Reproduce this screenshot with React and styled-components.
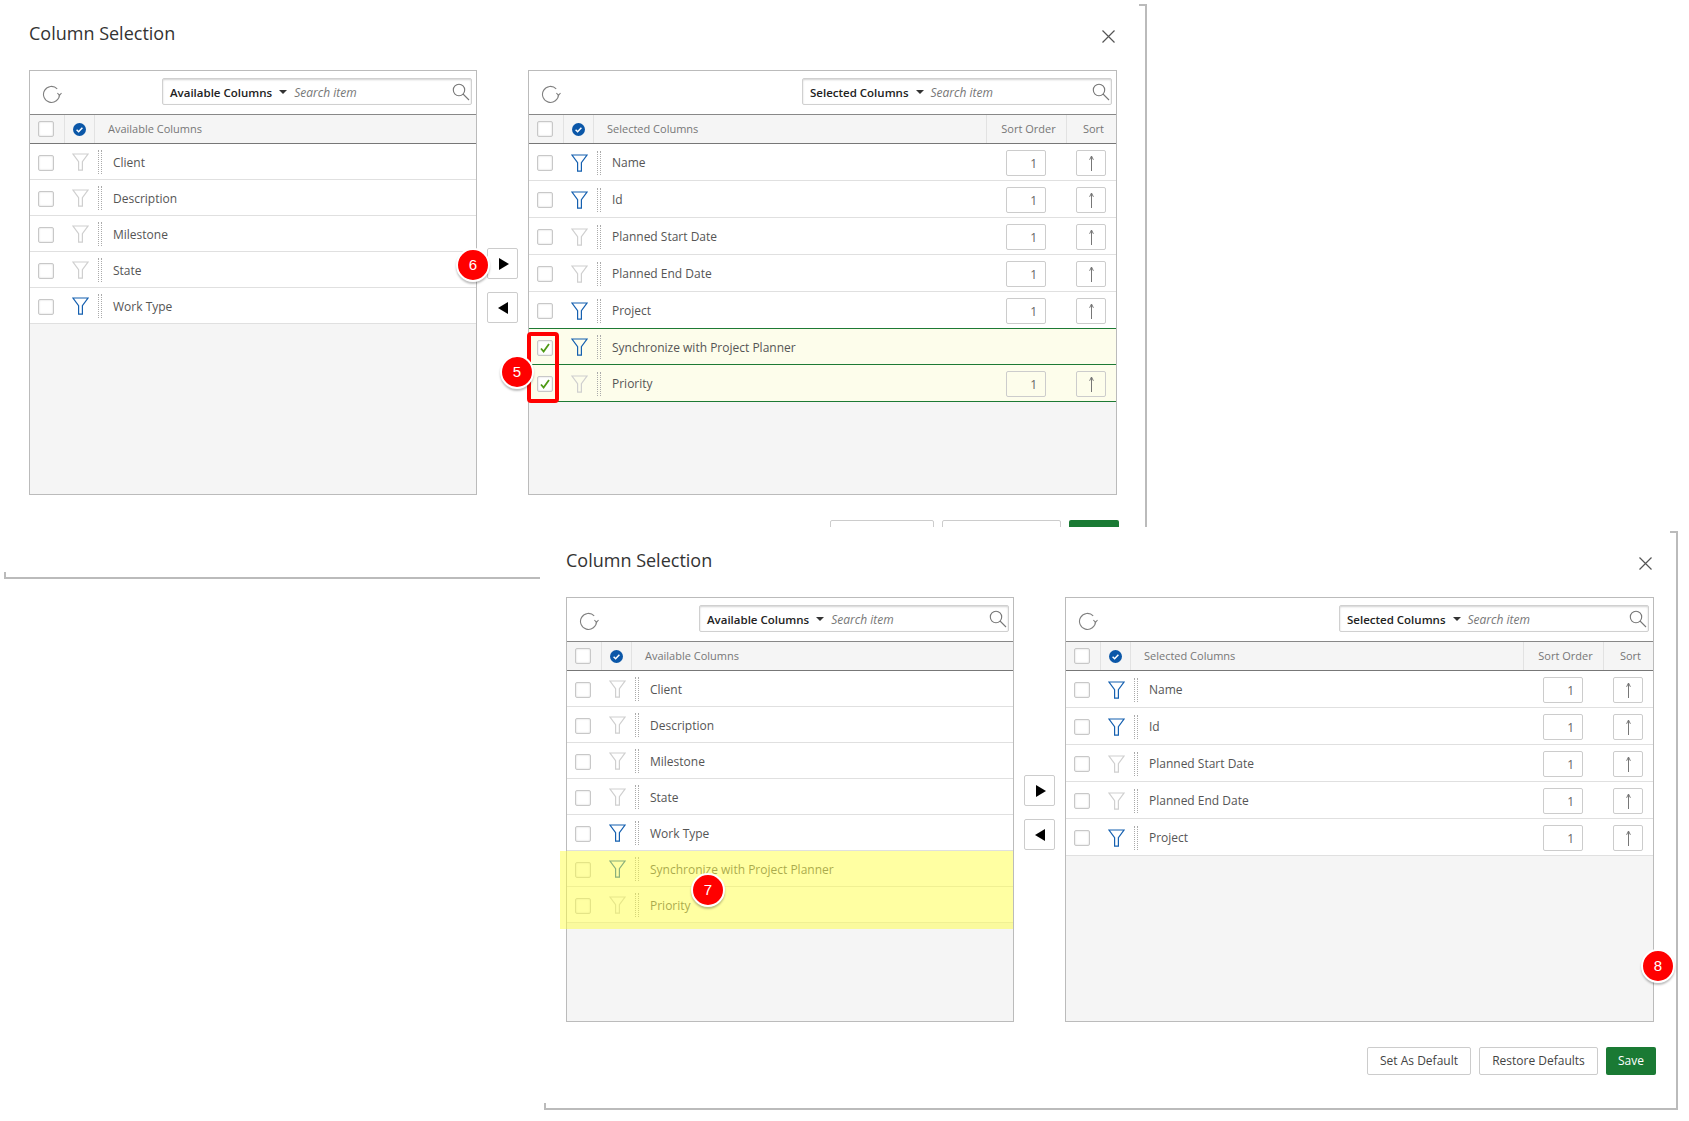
import React from "react";
import styled, { createGlobalStyle } from "styled-components";

const GlobalStyle = createGlobalStyle`
  * { box-sizing: border-box; }
  body {
    margin: 0;
    background: #fff;
    color: #555;
    font-family: "Open Sans", "Liberation Sans", sans-serif;
  }
`;

const AVAILABLE = [
  { name: "Client" },
  { name: "Description" },
  { name: "Milestone" },
  { name: "State" },
  { name: "Work Type", filtered: true },
];

const MOVED = [
  { name: "Synchronize with Project Planner", filtered: true },
  { name: "Priority" },
];

const SELECTED = [
  { name: "Name", filtered: true },
  { name: "Id", filtered: true },
  { name: "Planned Start Date" },
  { name: "Planned End Date" },
  { name: "Project", filtered: true },
];

function RefreshIcon() {
  return (
    <svg width="20" height="20" viewBox="0 0 20 20" fill="none" stroke="#808080" strokeWidth="1.1">
      <path d="M17.5 9.5A8 8 0 1 1 15.2 3.8" />
      <path d="M15.4 8l2.1 2.3 2-2.3" />
    </svg>
  );
}

function SearchIcon() {
  return (
    <svg width="18" height="18" viewBox="0 0 18 18" fill="none" stroke="#777" strokeWidth="1.1">
      <circle cx="7" cy="7" r="5.7" />
      <path d="M11 11l6 6" />
    </svg>
  );
}

function CloseIcon() {
  return (
    <svg width="13" height="13" viewBox="0 0 13 13" stroke="#555" strokeWidth="1.2">
      <path d="M.5.5l12 12M12.5.5l-12 12" />
    </svg>
  );
}

function FilterIcon({ active }) {
  return (
    <svg width="17" height="18" viewBox="0 0 17 18" fill="none" stroke={active ? "#1560b0" : "#cfcfcf"} strokeWidth="1.2">
      <path d="M1 1h15l-5.6 7.6v8.6H6.6V8.6z" />
    </svg>
  );
}

function CheckedCircle() {
  return (
    <svg width="13" height="13" viewBox="0 0 13 13">
      <circle cx="6.5" cy="6.5" r="6.5" fill="#0b57a8" />
      <path d="M3.6 6.8l2 1.9 3.8-4" fill="none" stroke="#fff" strokeWidth="1.5" />
    </svg>
  );
}

function UpArrow() {
  return (
    <svg width="9" height="16" viewBox="0 0 9 16" fill="none" stroke="#777" strokeWidth="1">
      <path d="M4.5 16V1M2.6 4.8l1.9-3.8 1.9 3.8" />
    </svg>
  );
}

function Triangle({ left }) {
  return (
    <svg width="10" height="12" viewBox="0 0 10 12" fill="#000">
      <path d={left ? "M10 0v12L0 6z" : "M0 0v12l10-6z"} />
    </svg>
  );
}

function ColumnRow({ row, height, sortable, picked, lastPlain }) {
  return (
    <Row $height={height} $picked={picked} $lastPlain={lastPlain}>
      <CheckCell>
        <Checkbox>
          {picked && (
            <svg width="10" height="10" viewBox="0 0 10 10" fill="none" stroke="#4f9a16" strokeWidth="1.8">
              <path d="M1 5.5l2.6 3L9 1" />
            </svg>
          )}
        </Checkbox>
      </CheckCell>
      <FilterCell>
        <FilterIcon active={row.filtered} />
      </FilterCell>
      <Grip />
      <RowName>{row.name}</RowName>
      {sortable && !row.noSort && (
        <>
          <OrderBox>1</OrderBox>
          <SortBox>
            <UpArrow />
          </SortBox>
        </>
      )}
    </Row>
  );
}

function Toolbar({ label }) {
  return (
    <ToolbarRow>
      <RefreshWrap>
        <RefreshIcon />
      </RefreshWrap>
      <SearchBox>
        <SearchLabel>{label}</SearchLabel>
        <Caret />
        <SearchHint>Search item</SearchHint>
        <SearchIcon />
      </SearchBox>
    </ToolbarRow>
  );
}

function HeadCells({ label, sortable }) {
  return (
    <HeadRow>
      <HeadCheck>
        <Checkbox />
      </HeadCheck>
      <HeadCircle>
        <CheckedCircle />
      </HeadCircle>
      <HeadLabel>{label}</HeadLabel>
      {sortable && (
        <>
          <HeadSort $width={80}>Sort Order</HeadSort>
          <HeadSort $width={50}>Sort</HeadSort>
        </>
      )}
    </HeadRow>
  );
}

function Dialog({ moved }) {
  return (
    <Content>
      <TitleRow>
        <Title>Column Selection</Title>
        <CloseWrap>
          <CloseIcon />
        </CloseWrap>
      </TitleRow>
      <Columns>
        <Panel>
          <Toolbar label="Available Columns" />
          <HeadCells label="Available Columns" />
          <List>
            {AVAILABLE.map((row) => (
              <ColumnRow key={row.name} row={row} height={36} />
            ))}
            {moved && (
              <Highlight>
                {MOVED.map((row) => (
                  <ColumnRow key={row.name} row={row} height={36} />
                ))}
              </Highlight>
            )}
          </List>
        </Panel>
        <MoveColumn>
          <MoveButton $nudge>
            <Triangle />
          </MoveButton>
          <MoveButton>
            <Triangle left />
          </MoveButton>
        </MoveColumn>
        <Panel>
          <Toolbar label="Selected Columns" />
          <HeadCells label="Selected Columns" sortable />
          <List>
            {SELECTED.map((row, i) => (
              <ColumnRow
                key={row.name}
                row={row}
                height={37}
                sortable
                lastPlain={!moved && i === SELECTED.length - 1}
              />
            ))}
            {!moved && (
              <>
                <ColumnRow row={{ ...MOVED[0], noSort: true }} height={36} sortable picked />
                <ColumnRow row={MOVED[1]} height={37} sortable picked />
              </>
            )}
          </List>
        </Panel>
      </Columns>
      <Footer>
        <FooterButton>Set As Default</FooterButton>
        <FooterButton $wide>Restore Defaults</FooterButton>
        <SaveButton>Save</SaveButton>
      </Footer>
    </Content>
  );
}

export default function App() {
  return (
    <Page>
      <GlobalStyle />
      <Shot>
        <Frame $width={1143} $height={575} $inset={25}>
          <Dialog />
        </Frame>
        <RedMark />
        <Badge $x={473} $y={265}>6</Badge>
        <Badge $x={517} $y={372}>5</Badge>
      </Shot>
      <Shot $second>
        <Frame $width={1134} $height={579} $inset={22}>
          <Dialog moved />
        </Frame>
        <Badge $x={168} $y={363}>7</Badge>
        <Badge $x={1118} $y={439}>8</Badge>
      </Shot>
    </Page>
  );
}

const Page = styled.div`
  min-height: 1121px;
  overflow: hidden;
`;

const Shot = styled.section`
  position: relative;
  padding: 4px 0 0 4px;
  background: #fff;
  margin-left: ${(p) => (p.$second ? 540 : 0)}px;
  margin-top: ${(p) => (p.$second ? -52 : 0)}px;
`;

const Frame = styled.div`
  position: relative;
  width: ${(p) => p.$width}px;
  height: ${(p) => p.$height}px;
  padding: 17px 0 0 ${(p) => p.$inset}px;
  border-right: 2px solid #bbb;
  border-bottom: 2px solid #bbb;
  &::before {
    content: "";
    position: absolute;
    top: 0;
    right: 0;
    width: 6px;
    height: 2px;
    background: #bbb;
  }
  &::after {
    content: "";
    position: absolute;
    left: 0;
    bottom: 0;
    width: 2px;
    height: 5px;
    background: #bbb;
  }
`;

const Content = styled.div`
  width: 1090px;
`;

const TitleRow = styled.div`
  display: flex;
  justify-content: space-between;
  height: 49px;
  padding-right: 4px;
`;

const Title = styled.h2`
  margin: 0;
  font-size: 18px;
  line-height: 24px;
  font-weight: 400;
  color: #333;
`;

const CloseWrap = styled.span`
  display: flex;
  margin-top: 9px;
  height: 13px;
`;

const Columns = styled.div`
  display: grid;
  grid-template-columns: 448px 51px 589px;
`;

const Panel = styled.div`
  display: flex;
  flex-direction: column;
  height: 425px;
  border: 1px solid #bbb;
  background: #f5f5f5;
`;

const ToolbarRow = styled.div`
  display: flex;
  justify-content: space-between;
  height: 44px;
  padding: 7px 4px 0 12px;
  background: #fff;
  border-bottom: 1px solid #888;
`;

const RefreshWrap = styled.span`
  display: flex;
  margin-top: 7px;
  height: 20px;
`;

const SearchBox = styled.div`
  display: flex;
  align-items: center;
  width: 310px;
  height: 27px;
  padding: 1px 1px 0 7px;
  border: 1px solid #d0d0d0;
  border-radius: 2px;
  box-shadow: inset 0 1px 2px rgba(0, 0, 0, 0.18);
`;

const SearchLabel = styled.span`
  font-size: 11.5px;
  font-weight: 600;
  color: #222;
  white-space: nowrap;
`;

const Caret = styled.span`
  width: 0;
  height: 0;
  margin: 0 7px 0 7px;
  border-left: 4px solid transparent;
  border-right: 4px solid transparent;
  border-top: 4px solid #333;
`;

const SearchHint = styled.span`
  flex: 1;
  font-size: 12px;
  font-style: italic;
  color: #777;
`;

const HeadRow = styled.div`
  display: flex;
  height: 29px;
  background: #f5f5f5;
  border-bottom: 1px solid #777;
  font-size: 11px;
  color: #777;
`;

const HeadCheck = styled.div`
  display: flex;
  align-items: center;
  width: 35px;
  padding-left: 8px;
  border-right: 1px solid #e2e2e2;
`;

const HeadCircle = styled.div`
  display: flex;
  align-items: center;
  justify-content: center;
  width: 30px;
  padding-right: 1px;
  border-right: 1px solid #e2e2e2;
`;

const HeadLabel = styled.div`
  flex: 1;
  padding-left: 13px;
  line-height: 28px;
`;

const HeadSort = styled.div`
  width: ${(p) => p.$width}px;
  padding-left: 4px;
  text-align: center;
  line-height: 28px;
  border-left: 1px solid #e2e2e2;
`;

const List = styled.div`
  flex: 1;
  background: #f5f5f5;
`;

const Row = styled.div`
  display: flex;
  align-items: center;
  height: ${(p) => p.$height}px;
  padding: 1px 10px 0 0;
  background: ${(p) => (p.$picked ? "#fdfdeb" : "#fff")};
  border-bottom: 1px solid ${(p) => (p.$picked || p.$lastPlain ? "#1d7a34" : "#e0e0e0")};
`;

const CheckCell = styled.div`
  display: flex;
  width: 42px;
  padding: 1px 0 0 8px;
`;

const Checkbox = styled.span`
  display: flex;
  align-items: center;
  justify-content: center;
  width: 16px;
  height: 16px;
  background: #fff;
  border: 1px solid #c8c8c8;
  border-radius: 2px;
  box-shadow: inset 0 0 2px rgba(0, 0, 0, 0.2);
`;

const FilterCell = styled.div`
  display: flex;
  width: 26px;
`;

const Grip = styled.span`
  width: 4px;
  height: 24px;
  border-left: 1px dotted #aaa;
  border-right: 1px dotted #aaa;
`;

const RowName = styled.span`
  flex: 1;
  padding-left: 11px;
  font-size: 12px;
  color: #555;
`;

const OrderBox = styled.span`
  width: 40px;
  height: 26px;
  padding-right: 8px;
  margin-right: 30px;
  border: 1px solid #ccc;
  border-radius: 2px;
  font-size: 12px;
  line-height: 25px;
  text-align: right;
  color: #666;
`;

const SortBox = styled.span`
  display: flex;
  align-items: center;
  justify-content: center;
  width: 30px;
  height: 26px;
  border: 1px solid #ccc;
  border-radius: 2px;
`;

const Highlight = styled.div`
  position: relative;
  &::after {
    content: "";
    position: absolute;
    top: 0;
    left: -7px;
    right: 0;
    bottom: -6px;
    background: rgba(255, 255, 70, 0.5);
  }
`;

const MoveColumn = styled.div`
  display: flex;
  flex-direction: column;
  justify-content: center;
  gap: 13px;
  padding: 6px 0 0 10px;
`;

const MoveButton = styled.button`
  display: flex;
  align-items: center;
  justify-content: center;
  width: 31px;
  height: 31px;
  padding: 0 0 0 ${(p) => (p.$nudge ? 2 : 0)}px;
  background: #fff;
  border: 1px solid #ccc;
  border-radius: 2px;
`;

const Footer = styled.div`
  display: flex;
  justify-content: flex-end;
  gap: 8px;
  margin-top: 25px;
  width: 1090px;
`;

const FooterButton = styled.button`
  width: ${(p) => (p.$wide ? 119 : 104)}px;
  height: 28px;
  padding: 0 0 1px;
  background: #fff;
  border: 1px solid #ccc;
  border-radius: 2px;
  font: 12px "Open Sans", "Liberation Sans", sans-serif;
  color: #444;
`;

const SaveButton = styled.button`
  width: 50px;
  height: 28px;
  padding: 0 0 1px;
  background: #1a7a34;
  border: none;
  border-radius: 2px;
  font: 12px "Open Sans", "Liberation Sans", sans-serif;
  color: #fff;
`;

const RedMark = styled.div`
  position: absolute;
  left: 527px;
  top: 332px;
  width: 32px;
  height: 71px;
  border: 4px solid #f00;
  border-radius: 4px;
`;

const Badge = styled.span`
  position: absolute;
  left: ${(p) => p.$x - 17}px;
  top: ${(p) => p.$y - 17}px;
  width: 34px;
  height: 34px;
  border: 2px solid #fff;
  border-radius: 50%;
  background: #f00;
  box-shadow: 0 2px 2px rgba(0, 0, 0, 0.25);
  font: 15px/30px "Liberation Sans", Arial, sans-serif;
  text-align: center;
  color: #fff;
`;
